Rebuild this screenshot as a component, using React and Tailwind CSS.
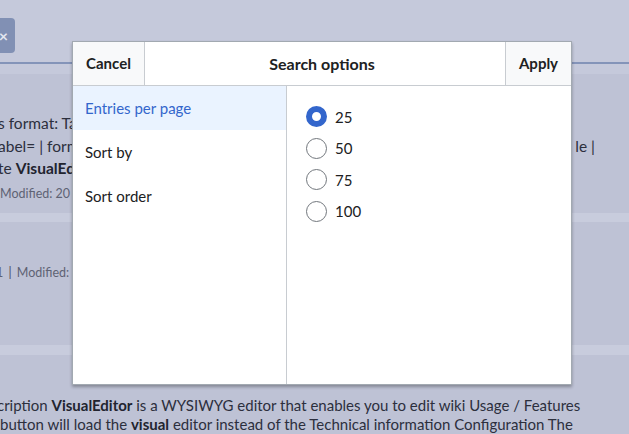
import { useState } from "react";

const options = ["25", "50", "75", "100"];
const sections = ["Entries per page", "Sort by", "Sort order"];

const Radio = ({ checked }) => (
  <span
    className={
      checked
        ? "w-[21px] h-[21px] rounded-full border-[6px] border-[#3366cc] bg-white box-border"
        : "w-[21px] h-[21px] rounded-full border border-[#72777d] bg-white box-border"
    }
  />
);

const App = () => {
  const [active] = useState(0);
  const [value, setValue] = useState("25");

  return (
    <div
      className="relative w-[629px] h-[434px] overflow-hidden bg-[#c5c9db] text-[#2c2f3d]"
      style={{ fontFamily: "Lato, 'Noto Sans', sans-serif" }}
    >
      {/* page behind the dialog */}
      <div className="pt-[18px] h-[62px]">
        <div className="-ml-[30px] w-[45px] h-[35px] rounded-[4px] bg-[#8190b4] flex items-center justify-end pr-[7px] text-[#e4e7f0] text-[16px] font-bold">
          ×
        </div>
      </div>
      <div className="h-[2px] bg-[#8494b9]" />
      <div className="h-[10px]" />

      <div className="h-[139px] bg-[#bec2d5] pt-[38px] -ml-[2px] text-[15.5px] leading-[22.5px] whitespace-nowrap">
        <div>s format: Table | label= | format= | tablesort</div>
        <div className="w-[597px] flex justify-between">
          <span>abel= | format= | link=none | tablestyle=wikitable</span>
          <span>le |</span>
        </div>
        <div>
          te <b className="text-[#22242f]">VisualEditor</b> template
        </div>
        <div className="mt-[3px] text-[12.5px] text-[#5e6274] pl-[2px]">Modified: 20 December</div>
      </div>
      <div className="h-[9px] bg-[#c8ccdd]" />

      <div className="h-[123px] bg-[#bec2d5] pt-[42px] whitespace-nowrap">
        <div className="-ml-[4px] text-[12.5px] text-[#5e6274]">
          1 <span className="text-[#4a4e60] mx-[2px]">|</span> Modified: 20 December
        </div>
      </div>
      <div className="h-[10px] bg-[#c8ccdd]" />

      <div className="bg-[#bec2d5] pt-[41px] -ml-[3px] text-[15px] leading-[19px] whitespace-nowrap">
        <div>
          cription <b className="text-[#22242f]">VisualEditor</b> is a WYSIWYG editor that enables you to edit wiki Usage / Features
        </div>
        <div className="pl-[3px]">
          button will load the <b className="text-[#22242f]">visual</b> editor instead of the Technical information Configuration The
        </div>
      </div>

      {/* dialog */}
      <div className="absolute left-[72px] top-[41px] w-[500px] h-[344px] bg-white border border-[#a2a9b1] shadow-[0_2px_3px_0_rgba(0,0,0,0.3)] flex flex-col text-[#202122]">
        <div className="h-[44px] flex border-b border-[#c8ccd1] text-[15px] font-bold">
          <button className="w-[72px] bg-[#f8f9fa] border-r border-[#c8ccd1] flex items-center justify-center">
            Cancel
          </button>
          <div className="flex-1 flex items-center justify-center pr-[6px] text-[16px]">
            Search options
          </div>
          <button className="w-[66px] bg-[#f8f9fa] border-l border-[#c8ccd1] flex items-center justify-center">
            Apply
          </button>
        </div>

        <div className="flex-1 flex">
          <div className="w-[214px] border-r border-[#c8ccd1]">
            {sections.map((s, i) => (
              <div
                key={s}
                className={
                  i === active
                    ? "h-[44px] flex items-center pl-[12px] text-[15px] bg-[#eaf3ff] text-[#3366cc]"
                    : "h-[44px] flex items-center pl-[12px] text-[15px]"
                }
              >
                {s}
              </div>
            ))}
          </div>

          <div className="flex-1 pl-[19px] pt-[15px]">
            {options.map((o) => (
              <label
                key={o}
                className="h-[31.5px] flex items-center gap-[8px] text-[15px] cursor-pointer"
                onClick={() => setValue(o)}
              >
                <Radio checked={value === o} />
                <span>{o}</span>
              </label>
            ))}
          </div>
        </div>
      </div>
    </div>
  );
};

export default App;
